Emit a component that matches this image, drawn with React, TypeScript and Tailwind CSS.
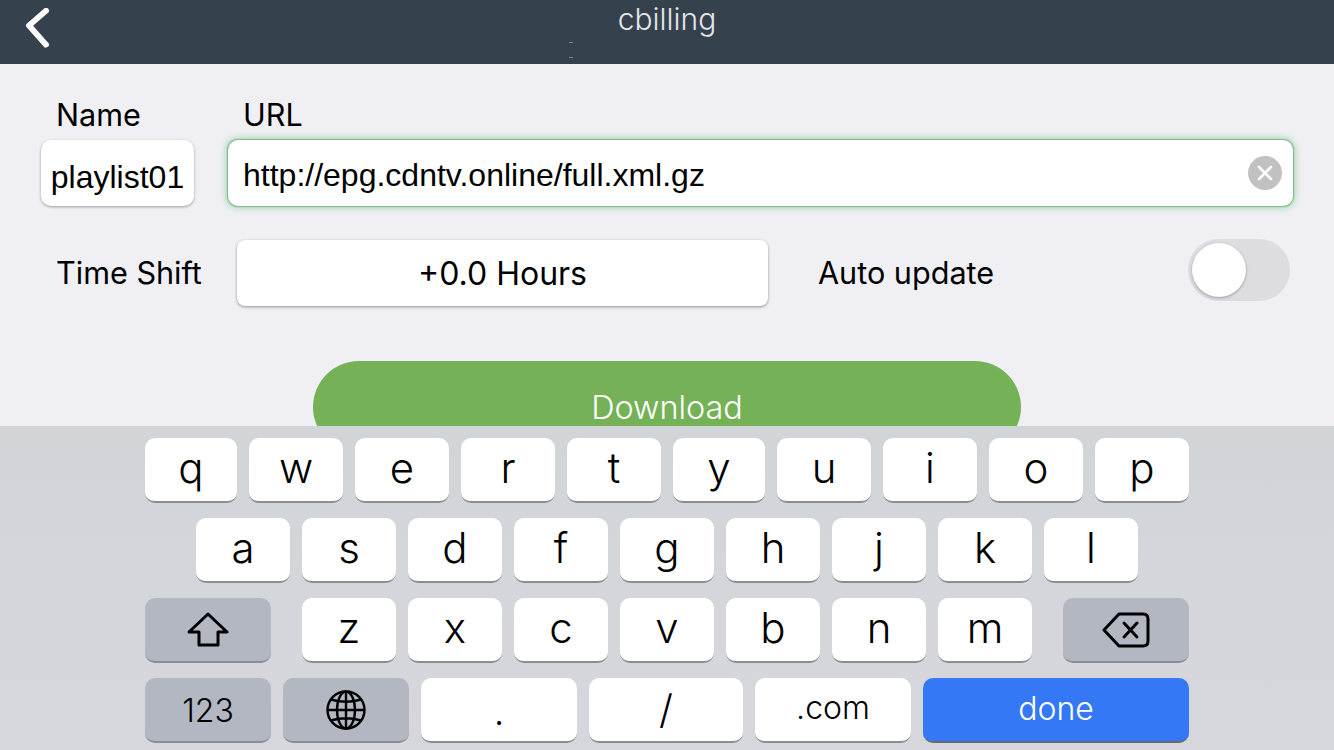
const ROW_1 = [
  { k: "q", w: "w-[92px]" },
  { k: "w", w: "w-[94px]" },
  { k: "e", w: "w-[94px]" },
  { k: "r", w: "w-[94px]" },
  { k: "t", w: "w-[94px]" },
  { k: "y", w: "w-[92px]" },
  { k: "u", w: "w-[94px]" },
  { k: "i", w: "w-[94px]" },
  { k: "o", w: "w-[94px]" },
  { k: "p", w: "w-[94px]" },
];
const ROW_2 = ["a", "s", "d", "f", "g", "h", "j", "k", "l"];
const ROW_3 = ["z", "x", "c", "v", "b", "n", "m"];

const keyBase =
  "flex h-[65px] items-center justify-center rounded-[10px] border-b-2 border-[#8c8d91] bg-white font-light text-black";
const letterKey = `${keyBase} pb-[5px] text-[42px]`;
const grayKey =
  "flex h-[65px] w-[126px] items-center justify-center rounded-[10px] border-b-2 border-[#8a8c94] bg-[#b2b7c2] text-black";

const ShiftIcon = () => (
  <svg width="42" height="36" viewBox="0 0 42 36" fill="none" stroke="black" strokeWidth="3" strokeLinejoin="round">
    <path d="M21 2 L40 20 H31 V33 H12 V20 H2 Z" />
  </svg>
);

const BackspaceIcon = () => (
  <svg width="48" height="36" viewBox="0 0 48 36" fill="none" stroke="black" strokeWidth="3" strokeLinejoin="round" strokeLinecap="round">
    <path d="M17 2 H41 Q46 2 46 7 V29 Q46 34 41 34 H17 L2 18 Z" />
    <path d="M22 11 L35 25 M35 11 L22 25" />
  </svg>
);

const GlobeIcon = () => (
  <svg width="40" height="40" viewBox="0 0 40 40" fill="none" stroke="black" strokeWidth="2.4">
    <circle cx="20" cy="20" r="18.5" />
    <ellipse cx="20" cy="20" rx="9" ry="18.5" />
    <path d="M20 1.5 V38.5 M1.5 20 H38.5 M5 9.5 Q20 14 35 9.5 M5 30.5 Q20 26 35 30.5" />
  </svg>
);

export default function App() {
  return (
    <div className="flex h-[750px] w-[1334px] flex-col overflow-hidden bg-[#efeff4] font-['Inter',sans-serif]">
      {/* nav bar */}
      <header className="relative flex h-16 shrink-0 items-start justify-center bg-[#35424d] pt-0.5">
        <svg className="absolute left-[24px] top-[8px]" width="28" height="40" viewBox="0 0 28 40" fill="none">
          <path d="M22 4 L5 20 L22 41" transform="translate(0 -1) scale(1 0.92)" stroke="white" strokeWidth="6" strokeLinecap="round" strokeLinejoin="round" />
        </svg>
        <span className="text-[30px] leading-[34px] font-light text-[#e3e6e8]">cbilling</span>
        {/* stray specks in the screenshot */}
        <span className="absolute top-[42px] left-[569px] h-px w-[4px] bg-[#7d868e]" />
        <span className="absolute top-[57px] left-[569px] h-px w-[4px] bg-[#7d868e]" />
      </header>

      {/* form */}
      <main className="min-h-0 flex-1 overflow-hidden px-[41px] pt-[32px]">
        <div className="flex gap-[34px]">
          <div className="w-[153px] shrink-0">
            <div className="pl-[15px] text-[30.6px] leading-[38px] text-black">Name</div>
            <div className="mt-1.5 flex h-[66px] items-center justify-center rounded-[10px] bg-white pt-2 font-['Liberation_Sans',sans-serif] text-[32px] text-black shadow-[0_1px_3px_rgba(0,0,0,0.35)]">
              playlist01
            </div>
          </div>
          <div className="min-w-0 flex-1">
            <div className="pl-[15px] text-[30.6px] leading-[38px] text-black">URL</div>
            <div className="mt-1.5 flex h-[66px] items-center justify-between rounded-[10px] bg-white pr-[11px] pl-[15px] font-['Liberation_Sans',sans-serif] text-[32px] text-black shadow-[0_0_1px_1px_rgba(120,170,125,0.8),0_0_6px_2px_rgba(110,200,125,0.6)]">
              <span className="pt-1">http://epg.cdntv.online/full.xml.gz</span>
              <span className="flex h-[34px] w-[34px] items-center justify-center rounded-full bg-[#c1c1c1]">
                <svg width="16" height="16" viewBox="0 0 16 16" stroke="white" strokeWidth="2.6" strokeLinecap="round">
                  <path d="M2 2 L14 14 M14 2 L2 14" />
                </svg>
              </span>
            </div>
          </div>
        </div>

        <div className="mt-[34px] flex h-[66px] items-center pl-[15px]">
          <span className="w-[181px] shrink-0 text-[30.6px] text-black">Time Shift</span>
          <div className="flex h-[66px] w-[531px] shrink-0 items-center justify-center rounded-[8px] bg-white pt-0.5 text-[32px] text-black shadow-[0_1px_3px_rgba(0,0,0,0.4)]">
            +0.0 Hours
          </div>
          <span className="ml-[50px] text-[30.6px] text-black">Auto update</span>
          <div className="mr-[3px] mb-[6px] ml-auto flex h-[62px] w-[102px] items-center rounded-full bg-[#dcdce1] pl-1">
            <span className="h-[54px] w-[54px] rounded-full bg-white shadow-[0_1px_3px_rgba(0,0,0,0.3)]" />
          </div>
        </div>

        <div className="mx-auto mt-[55px] flex h-[92px] w-[708px] items-center justify-center rounded-full bg-[#75b257] pt-0.5 text-[32.4px] font-light text-white">
          Download
        </div>
      </main>

      {/* keyboard */}
      <section className="flex h-[324px] shrink-0 flex-col gap-[15px] bg-linear-to-b from-[#d1d5d8] to-[#d6d7dc] px-[145px] pt-3">
        <div className="flex gap-3">
          {ROW_1.map(({ k, w }) => (
            <div key={k} className={`${letterKey} ${w}`}>{k}</div>
          ))}
        </div>
        <div className="flex justify-center gap-3">
          {ROW_2.map((k) => (
            <div key={k} className={`${letterKey} w-[94px]`}>{k}</div>
          ))}
        </div>
        <div className="flex justify-between">
          <div className={grayKey}><ShiftIcon /></div>
          <div className="flex gap-3">
            {ROW_3.map((k) => (
              <div key={k} className={`${letterKey} w-[94px]`}>{k}</div>
            ))}
          </div>
          <div className={grayKey}><BackspaceIcon /></div>
        </div>
        <div className="flex gap-3">
          <div className={`${grayKey} pt-0.5 text-[32px] font-light`}>123</div>
          <div className={grayKey}><GlobeIcon /></div>
          <div className={`${keyBase} w-[156px] pt-1 text-[38px]`}>.</div>
          <div className={`${keyBase} w-[154px] text-[40px]`}>/</div>
          <div className={`${keyBase} w-[156px] pb-[3px] text-[32px]`}>.com</div>
          <div className="flex h-[65px] flex-1 items-center justify-center rounded-[10px] border-b-2 border-[#666a73] bg-[#3478f6] pb-0.5 text-[32px] font-light text-white">
            done
          </div>
        </div>
      </section>
    </div>
  );
}
